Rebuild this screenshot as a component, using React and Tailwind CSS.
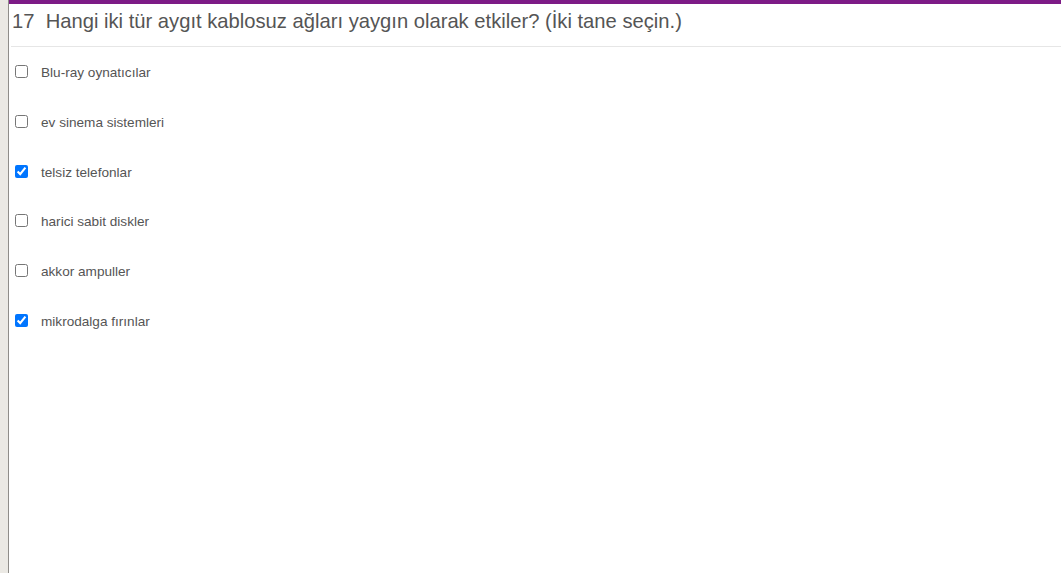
const options = [
	{ label: "Blu-ray oynatıcılar", checked: false },
	{ label: "ev sinema sistemleri", checked: false },
	{ label: "telsiz telefonlar", checked: true },
	{ label: "harici sabit diskler", checked: false },
	{ label: "akkor ampuller", checked: false },
	{ label: "mikrodalga fırınlar", checked: true },
];

const App = () => {
	return (
		<div className="flex h-[573px] w-[1061px] overflow-hidden bg-white font-['Liberation_Sans',Arial,sans-serif]">
			{/* Left frame strip */}
			<div className="w-[8px] shrink-0 bg-[#ebe9e4]" />
			<div className="w-px shrink-0 bg-[#8f8d89]" />

			<div className="flex flex-1 flex-col">
				{/* Accent bar */}
				<div className="h-[4px] bg-[#7d1b86]" />

				{/* Question header */}
				<div className="ml-[2px] border-b border-[#e6e6e6] pb-[12px] pl-[1px] pt-[4px]">
					<h1 className="text-[20.2px] leading-[26px] text-[#555555]">
						17&nbsp; Hangi iki tür aygıt kablosuz ağları yaygın olarak etkiler? (İki tane seçin.)
					</h1>
				</div>

				{/* Options */}
				<div className="flex flex-col pl-[6px] pt-[17px]">
					{options.map((opt, i) => (
						<label key={i} className="flex h-[49.8px] items-start gap-[13px]">
							<input
								type="checkbox"
								defaultChecked={opt.checked}
								className="m-0 mt-[1px] h-[13px] w-[13px] accent-[#0075ff]"
							/>
							<span className="mt-[1px] text-[13.6px] leading-[16px] text-[#555555]">{opt.label}</span>
						</label>
					))}
				</div>
			</div>
		</div>
	);
};

export default App;
